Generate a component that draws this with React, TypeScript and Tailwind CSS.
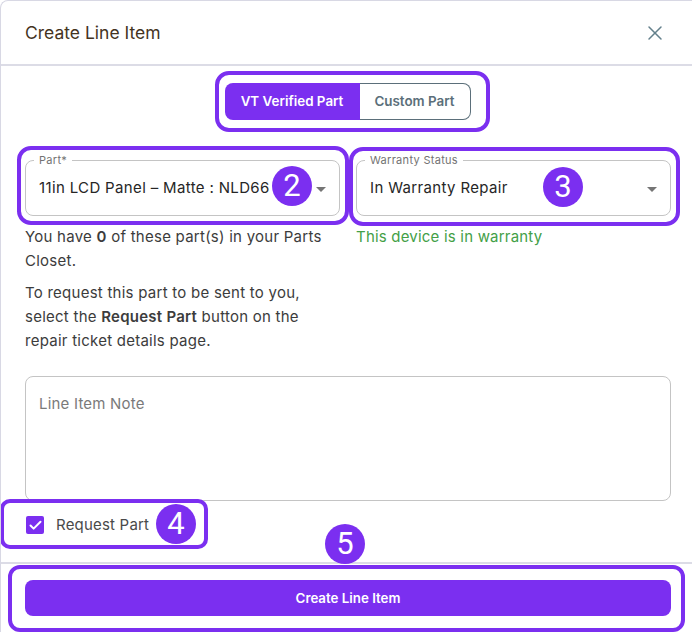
import React from 'react';
import { X, Check } from 'lucide-react';

const Highlight = ({ className }: { className: string }) => (
  <div className={`absolute border-[4px] border-[#7b2ff0] pointer-events-none ${className}`}></div>
);

const Badge = ({ n, className }: { n: number; className: string }) => (
  <div className={`absolute w-10 h-10 rounded-full bg-[#7b2ff0] text-white flex items-center justify-center text-[31px] font-['Roboto',sans-serif] ${className}`}>
    {n}
  </div>
);

const Caret = () => (
  <svg width="10" height="5" viewBox="0 0 10 5" className="absolute right-[13px] top-[26px]">
    <path d="M0 0 L10 0 L5 5 Z" fill="#757575" />
  </svg>
);

const SelectField = ({ label, value }: { label: string; value: string }) => (
  <div className="relative h-[56px] border border-[#c4c4c4] rounded-[8px] pl-[13px] pr-[40px] flex items-center overflow-visible">
    <span className="absolute left-[8px] -top-[7px] bg-white px-[5px] text-[11px] leading-[13px] tracking-[0.3px] text-[#737373]">{label}</span>
    <span className="text-[15px] tracking-[0.35px] text-[#262626] whitespace-nowrap overflow-hidden">{value}</span>
    <Caret />
  </div>
);

export default function App() {
  return (
    <div className="relative w-[692px] h-[632px] bg-white overflow-hidden rounded-tl-[8px] border-l border-[#d8d8e4] border-t font-['Inter',sans-serif] flex flex-col">
      <header className="h-[65px] shrink-0 border-b-[2px] border-[#dcdce6] pl-[24px] pr-[25px] flex items-center justify-between">
        <h2 className="text-[17.5px] font-normal text-[#44341f] pt-[1px]">Create Line Item</h2>
        <X size={24} strokeWidth={1.5} className="text-[#64808c] mt-[1px]" />
      </header>

      <main className="flex-1 pl-[24px] pr-[21px] pt-[17px]">
        <div className="flex justify-center pr-[1px]">
          <div className="flex h-[37px] rounded-[8px] text-[13.4px] font-semibold">
            <button className="w-[135px] bg-[#7b2ff0] text-white rounded-l-[8px]">VT Verified Part</button>
            <button className="w-[111px] bg-white text-[#5b6f7a] border border-l-0 border-[#5b6f7a] rounded-r-[8px]">Custom Part</button>
          </div>
        </div>

        <div className="grid grid-cols-[315px_315px] gap-x-[16px] mt-[40px]">
          <div>
            <SelectField label="Part*" value="11in LCD Panel – Matte : NLD66" />
            <p className="mt-[9px] text-[15px] leading-[24px] tracking-[0.25px] text-[#3c3c3c]">
              You have <b className="font-semibold">0</b> of these part(s) in your Parts Closet.
            </p>
            <p className="mt-[8px] text-[15px] leading-[24px] tracking-[0.25px] text-[#3c3c3c]">
              To request this part to be sent to you, select the <b className="font-semibold">Request Part</b> button on the repair ticket details page.
            </p>
          </div>
          <div>
            <SelectField label="Warranty Status" value="In Warranty Repair" />
            <p className="mt-[9px] text-[15px] leading-[24px] tracking-[0.2px] text-[#43a047]">This device is in warranty</p>
          </div>
        </div>

        <div className="mt-[23px] h-[125px] border border-[#c4c4c4] rounded-[8px] px-[13px] py-[17px] text-[15px] leading-[20px] tracking-[0.2px] text-[#7a7a7a]">
          Line Item Note
        </div>

        <label className="flex items-center mt-[14px] h-[20px]">
          <span className="w-[18px] h-[18px] ml-[1px] rounded-[2px] bg-[#7b2ff0] flex items-center justify-center">
            <Check size={15} strokeWidth={3.2} className="text-white" />
          </span>
          <span className="ml-[12px] text-[15px] tracking-[0.2px] text-[#4a4a4a]">Request Part</span>
        </label>
      </main>

      <footer className="h-[70px] shrink-0 border-t-[2px] border-[#dcdce6] pl-[24px] pr-[21px] pt-[16px]">
        <button className="w-full h-[36px] pt-[1px] rounded-[8px] bg-[#7b2ff0] text-white text-[13.3px] font-semibold">Create Line Item</button>
      </footer>

      <Highlight className="left-[214px] top-[70px] w-[275px] h-[61px] rounded-[14px]" />
      <Highlight className="left-[16px] top-[145px] w-[332px] h-[79px] rounded-[14px]" />
      <Highlight className="left-[348px] top-[146px] w-[331px] h-[79px] rounded-[14px]" />
      <Highlight className="-left-px top-[498px] w-[208px] h-[50px] rounded-[10px]" />
      <Highlight className="left-[7px] top-[564px] w-[677px] h-[67px] rounded-[12px]" />

      <Badge n={2} className="left-[271px] top-[165px]" />
      <Badge n={3} className="left-[542px] top-[166px]" />
      <Badge n={4} className="left-[155px] top-[503px]" />
      <Badge n={5} className="left-[324px] top-[523px]" />
    </div>
  );
}
